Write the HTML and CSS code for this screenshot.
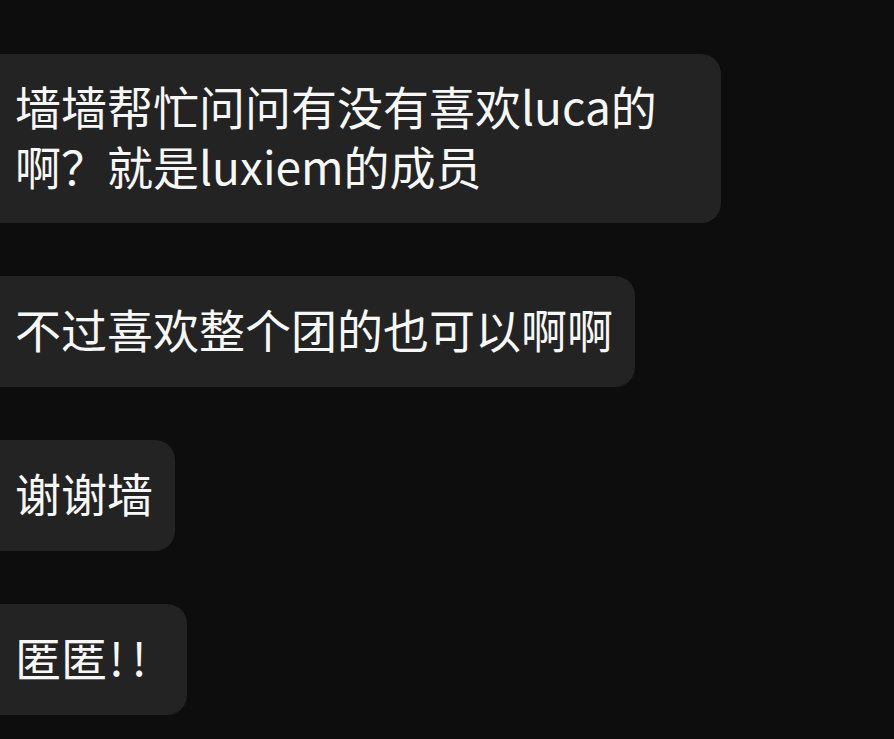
FILE: index.html
```html
<!DOCTYPE html>
<html lang="zh">
<head>
<meta charset="utf-8">
<link rel="stylesheet" href="styles.css">
</head>
<body>
<div class="chat">
  <div class="bubble wide">墙墙帮忙问问有没有喜欢luca的<br>啊？就是luxiem的成员</div>
  <div class="bubble">不过喜欢整个团的也可以啊啊</div>
  <div class="bubble">谢谢墙</div>
  <div class="bubble bang">匿匿<span class="excl">!!</span></div>
</div>
</body>
</html>
```
FILE: styles.css
```css
html, body {
  margin: 0;
  padding: 0;
  background: #0d0d0d;
}
.chat {
  display: flex;
  flex-direction: column;
  align-items: flex-start;
  gap: 53px;
  padding-top: 54px;
  height: 739px;
  box-sizing: border-box;
  overflow: hidden;
}
.bubble {
  background: #232323;
  color: #f7f7f7;
  font-family: "Noto Sans CJK SC", sans-serif;
  font-size: 46px;
  line-height: 60px;
  padding: 21.5px 22px 29.5px 15px;
  border-radius: 0 20px 20px 0;
  white-space: nowrap;
}
.wide {
  width: 721px;
  box-sizing: border-box;
  padding-top: 20.5px;
  padding-bottom: 28.5px;
}
.bang {
  padding-right: 32px;
}
.excl {
  margin-left: 2px;
  letter-spacing: 8px;
}
```
